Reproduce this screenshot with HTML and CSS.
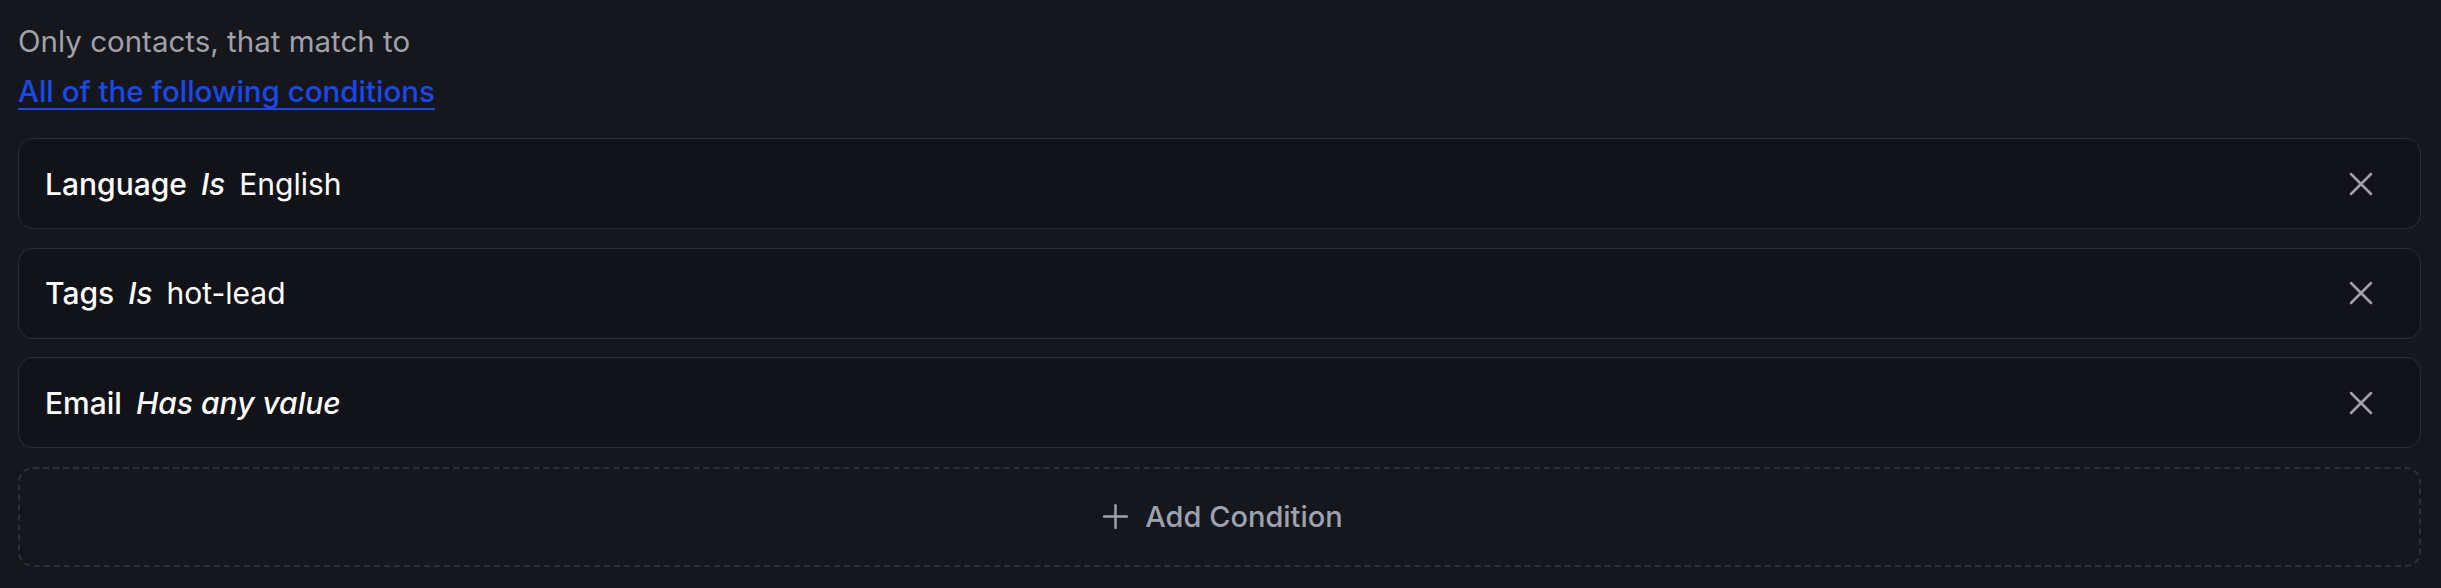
FILE: index.html
```html
<!DOCTYPE html>
<html lang="en">
<head>
    <meta charset="UTF-8">
    <meta name="viewport" content="width=device-width, initial-scale=1.0">
    <title>Segment conditions</title>
    <link rel="stylesheet" href="styles.css">
</head>
<body>

    <div class="segment">
        <p class="intro">Only contacts, that match to</p>
        <a href="#" class="match-link">All of the following conditions</a>

        <div class="conditions">
            <div class="condition">
                <div class="condition-text">
                    <span class="field">Language</span>
                    <span class="operator">Is</span>
                    <span class="value">English</span>
                </div>
                <button class="remove" aria-label="Remove condition">
                    <svg viewBox="0 0 24 24" width="40" height="40" fill="none" stroke="currentColor" stroke-width="1.5" stroke-linecap="round"><path d="M18 6 6 18"/><path d="m6 6 12 12"/></svg>
                </button>
            </div>

            <div class="condition">
                <div class="condition-text">
                    <span class="field">Tags</span>
                    <span class="operator">Is</span>
                    <span class="value">hot-lead</span>
                </div>
                <button class="remove" aria-label="Remove condition">
                    <svg viewBox="0 0 24 24" width="40" height="40" fill="none" stroke="currentColor" stroke-width="1.5" stroke-linecap="round"><path d="M18 6 6 18"/><path d="m6 6 12 12"/></svg>
                </button>
            </div>

            <div class="condition">
                <div class="condition-text">
                    <span class="field">Email</span>
                    <span class="operator">Has any value</span>
                </div>
                <button class="remove" aria-label="Remove condition">
                    <svg viewBox="0 0 24 24" width="40" height="40" fill="none" stroke="currentColor" stroke-width="1.5" stroke-linecap="round"><path d="M18 6 6 18"/><path d="m6 6 12 12"/></svg>
                </button>
            </div>

            <button class="add-condition">
                <svg viewBox="0 0 24 24" width="39" height="39" fill="none" stroke="currentColor" stroke-width="1.5" stroke-linecap="round"><path d="M5 12h14"/><path d="M12 5v14"/></svg>
                <span>Add Condition</span>
            </button>
        </div>
    </div>

</body>
</html>
```

FILE: styles.css
```css
body {
    margin: 0;
    background-color: #16171c;
    font-family: Inter, "Noto Sans", sans-serif;
}
.segment {
    padding: 16px 20px 20px 18px;
}
.intro {
    margin: 0;
    font-size: 29.5px;
    line-height: 50px;
    color: #a1a1aa;
}
.match-link {
    display: inline-block;
    font-size: 29.5px;
    line-height: 50px;
    font-weight: 500;
    color: #1b48ec;
    text-decoration: underline;
    text-decoration-thickness: 2px;
    text-underline-offset: 6px;
}
.conditions {
    display: flex;
    flex-direction: column;
    gap: 18.5px;
    margin-top: 22px;
}
.condition {
    display: flex;
    align-items: center;
    justify-content: space-between;
    height: 91px;
    box-sizing: border-box;
    padding: 0 39px 0 26px;
    border: 1px solid #2c2d34;
    border-radius: 15px;
    background-color: #121318;
}
.condition-text {
    display: flex;
    align-items: baseline;
    gap: 14px;
    font-size: 30px;
    font-weight: 500;
    color: #ffffff;
}
.operator {
    font-style: italic;
}
.value {
    font-weight: 400;
}
.remove {
    display: flex;
    padding: 0;
    border: none;
    background: none;
    color: #a1a1aa;
    cursor: pointer;
}
.add-condition {
    display: flex;
    align-items: center;
    justify-content: center;
    gap: 10px;
    height: 100px;
    border: 2px dashed #2e3038;
    border-radius: 15px;
    background: none;
    font-family: inherit;
    font-size: 29px;
    font-weight: 500;
    color: #9ca3af;
    cursor: pointer;
}
```
